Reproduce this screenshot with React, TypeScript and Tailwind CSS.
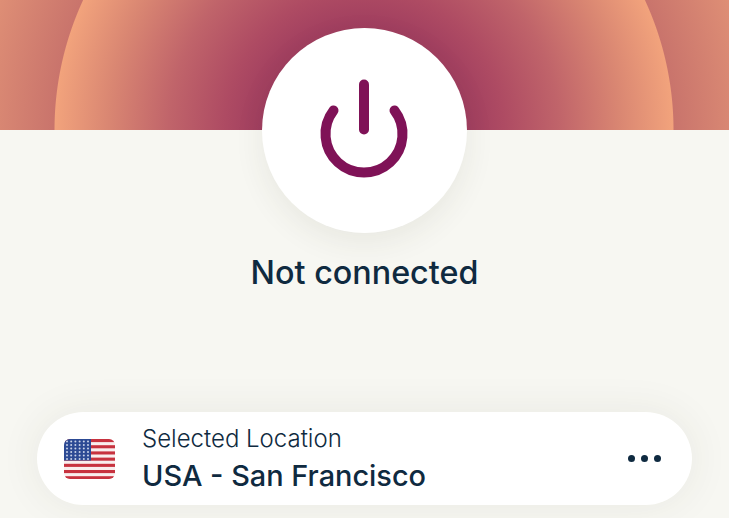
const INK = "#0f2a40";

function PowerIcon() {
  return (
    <svg width="100" height="110" viewBox="0 0 100 110" fill="none" stroke="#7f1257" strokeWidth="10" strokeLinecap="round">
      <path d="M49 8.5V53.5" />
      <path d="M18.5 34.5A38.5 38.5 0 1 0 79.5 34.5" />
    </svg>
  );
}

function UsaFlag() {
  const stripes = [0, 1, 2, 3, 4, 5, 6];
  const stars = [];
  for (let row = 0; row < 6; row++) {
    for (let col = 0; col < 6; col++) {
      stars.push(<circle key={`${row}-${col}`} cx={3 + col * 4.2} cy={2.4 + row * 3.5} r="1" fill="#c9d3e8" />);
    }
  }
  return (
    <svg width="51" height="40" viewBox="0 0 51 40" className="shrink-0">
      <defs>
        <clipPath id="flag-clip">
          <rect width="51" height="40" rx="6" />
        </clipPath>
      </defs>
      <g clipPath="url(#flag-clip)">
        <rect width="51" height="40" fill="#f9eeee" />
        {stripes.map((i) => (
          <rect key={i} y={i * 6.2} width="51" height="3.1" fill="#c7323f" />
        ))}
        <rect width="27" height="21.5" fill="#2c4a94" />
        {stars}
      </g>
    </svg>
  );
}

export default function App() {
  return (
    <div className="h-[518px] w-[729px] overflow-hidden bg-[#f7f7f2] font-['Inter',sans-serif]">
      <div className="h-[130px] bg-[radial-gradient(circle_at_364px_130px,#8f2f5c_0px,#9f3d5f_100px,#ae4b63_140px,#c0646a_195px,#d98672_255px,#f2a37c_309px,#c9746c_310px,#e29377_400px,#e59679_440px)]" />

      <div className="flex flex-col items-center">
        <div className="-mt-[102px] flex h-[205px] w-[205px] items-center justify-center rounded-full bg-white shadow-[0_10px_30px_rgba(60,60,40,0.08)]">
          <PowerIcon />
        </div>

        <p className="mt-[20px] text-[32.3px] leading-[40px] font-medium text-[#0f2a40]">Not connected</p>

        <div className="mt-[119px] flex h-[93px] w-[655px] items-center rounded-full bg-white pr-[31px] pl-[27px] shadow-[0_0_40px_rgba(60,60,40,0.08)]">
          <UsaFlag />
          <div className="ml-[27px] flex-1 pt-[4px]" style={{ color: INK }}>
            <p className="-mt-[2px] text-[24px] leading-[30px] font-light">Selected Location</p>
            <p className="mt-[3px] text-[28.9px] leading-[38px] font-medium">USA - San Francisco</p>
          </div>
          <div className="flex gap-[6px]">
            <span className="h-[7px] w-[7px] rounded-full bg-[#0f2a40]" />
            <span className="h-[7px] w-[7px] rounded-full bg-[#0f2a40]" />
            <span className="h-[7px] w-[7px] rounded-full bg-[#0f2a40]" />
          </div>
        </div>
      </div>
    </div>
  );
}
